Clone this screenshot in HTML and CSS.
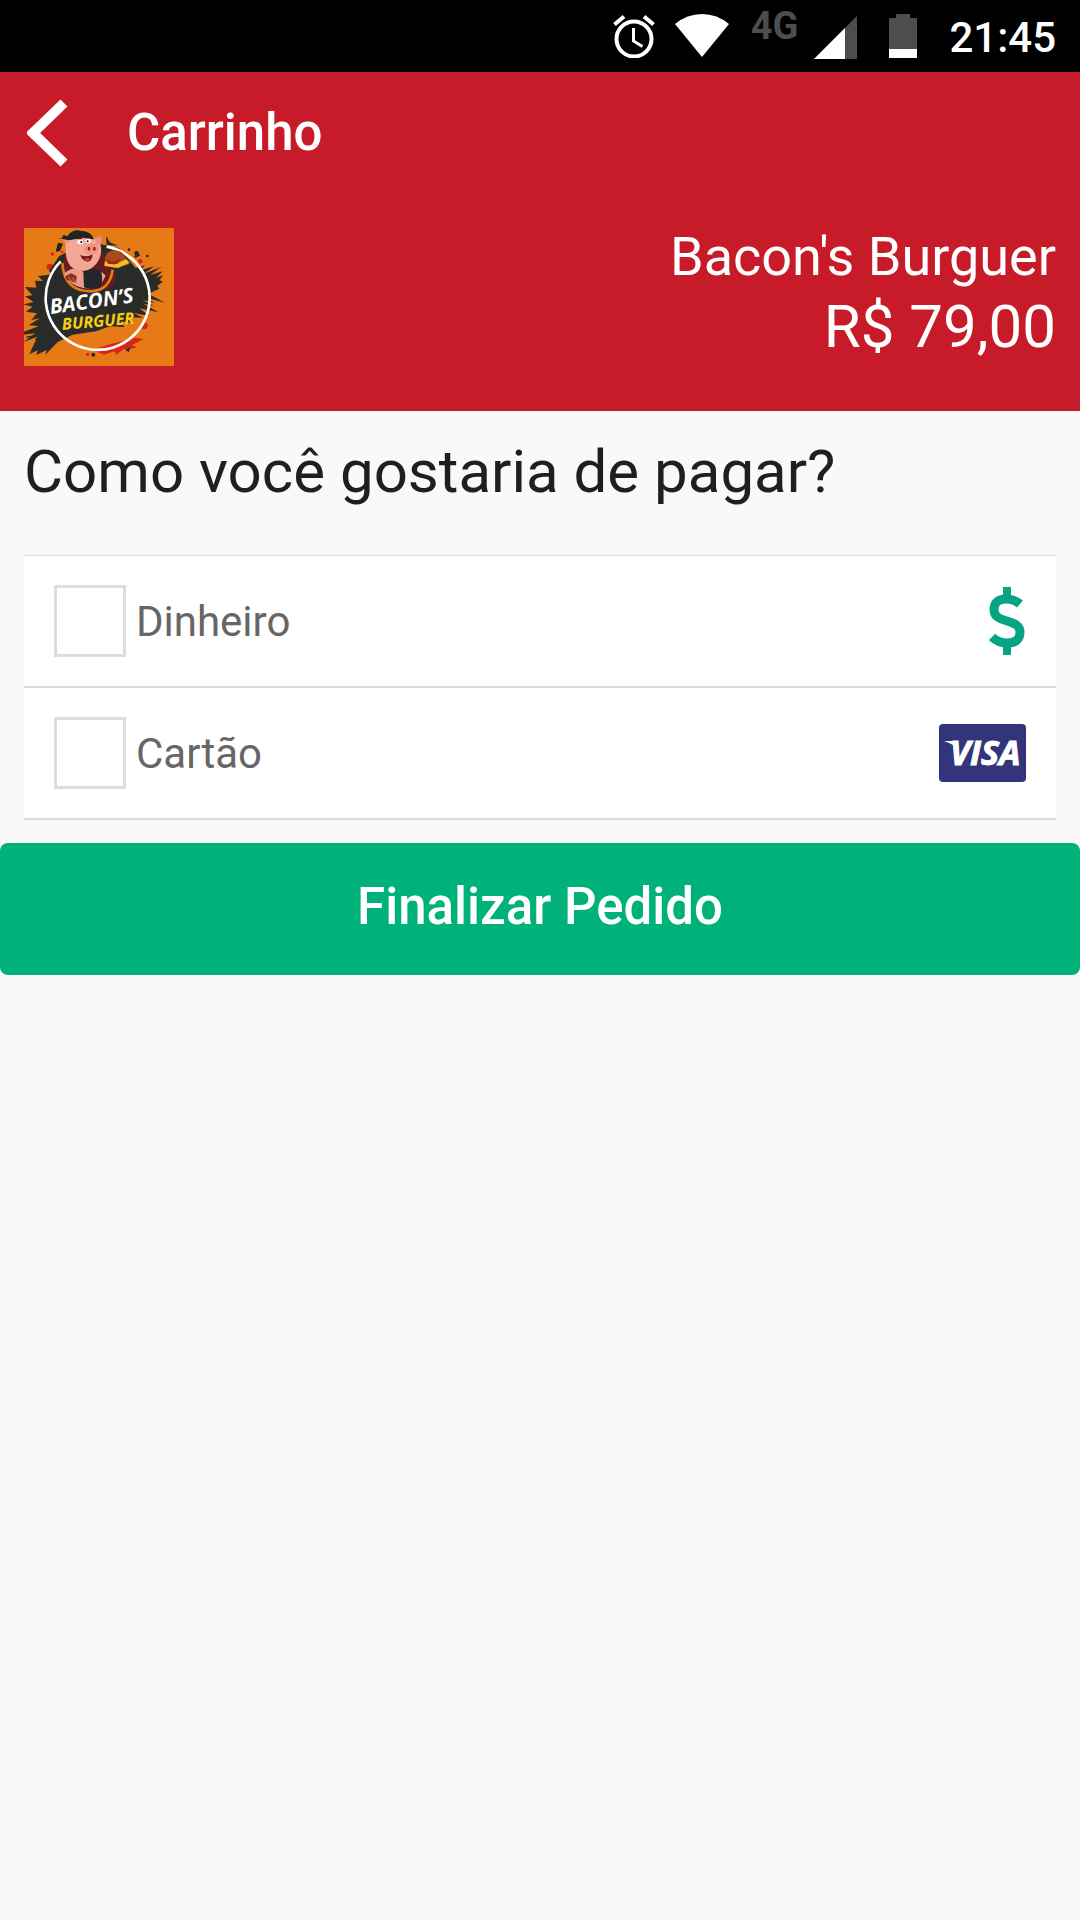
FILE: index.html
```
<!DOCTYPE html>
<html lang="pt-BR">
<head>
    <meta charset="UTF-8">
    <meta name="viewport" content="width=device-width, initial-scale=1.0">
    <title>Carrinho</title>
    <link rel="stylesheet" href="styles.css">
</head>
<body>
    <div class="status-bar">
        <svg class="alarm" width="42" height="44" viewBox="0 0 42 44" fill="none" stroke="#fff">
            <circle cx="21" cy="25" r="17.5" stroke-width="4"/>
            <path d="M20.5 14v13l9 5.500" stroke-width="3"/>
            <path d="M1.500 10.500l9.500-8M40.500 10.500l-9.500-8" stroke-width="4"/>
        </svg>
        <svg class="wifi" width="54" height="44" viewBox="0 0 54 44" fill="#fff">
            <path d="M0 10Q12 0 27 0t27 10L27 43z"/>
        </svg>
        <span class="network">4G</span>
        <svg class="signal" width="43" height="44" viewBox="0 0 43 44">
            <path d="M0 45L43 2v43z" fill="#4d4d4d"/>
            <path d="M0 45L31 14v31z" fill="#fff"/>
        </svg>
        <svg class="battery" width="28" height="44" viewBox="0 0 28 44">
            <path d="M7 0h14v4h7v40H0V4h7z" fill="#4d4d4d"/>
            <path d="M0 35h28v9H0z" fill="#fff"/>
        </svg>
        <span class="clock">21:45</span>
    </div>

    <header class="header">
        <div class="title-bar">
            <button class="back" type="button" aria-label="Voltar">
                <svg width="41" height="68" viewBox="0 0 41 68"><path d="M37 4L6 34l31 30" fill="none" stroke="#fff" stroke-width="10"/></svg>
            </button>
            <h1>Carrinho</h1>
        </div>
        <div class="store">
            <svg class="logo" width="150" height="138" viewBox="0 0 450 414" role="img" aria-label="Bacon's Burguer">
                <rect width="450" height="414" fill="#e67a17"/>
                <!-- paint splashes -->
                <g fill="#d92418">
                    <circle cx="78" cy="117" r="10"/><circle cx="85" cy="78" r="5"/><circle cx="114" cy="72" r="4"/>
                    <circle cx="361" cy="293" r="10"/><circle cx="349" cy="100" r="7"/><circle cx="191" cy="379" r="5"/>
                    <path d="M205 366l45-15 85-22 24 4-35 18 15 8-42 5-19 16-8-10-30 10z"/>
                </g>
                <g fill="#292b29">
                    <path d="M75 130l30-45 80-45 100 20 50 60 28-8-14 15 42-12-34 24 55-23-34 25 38-11-20 19 21-7-10 14 9 5-16 13 6 8-33 15 51 28-55-16 22 16-36-9 35 18-32-7 45 26-57-12 30 23-48-9 29 14-50-1 18 17-35-5 11 17-43-2-42 15-70 10-45 22-37 38 4-14-31 15 4-14-25 12 24-53-44 17 38-27-65 7 75-28-30-4 34-20-26 5 17-20-33-5 20-15-27-7 30-7-26-17 22-3-22-25 34 2-4-21 24 1-15-15 43-5z"/>
                    <path d="M246 23l11 20 25 10-34-2zM8 325l32-4-32 9zM303 365l17-7-6 14zM330 85l13-10 6 7-14 8z"/>
                    <circle cx="338" cy="76" r="7"/><circle cx="208" cy="380" r="6"/><circle cx="38" cy="334" r="4"/>
                    <circle cx="370" cy="84" r="4"/><circle cx="315" cy="65" r="4"/>
                </g>
                <path d="M248 56A156 156 0 1 1 110 100" fill="none" stroke="#fff" stroke-width="8"/>
                <!-- pig inside the badge -->
                <path d="M122 80Q105 193 205 190T262 110L220 55z" fill="#641c20"/>
                <path d="M115 105Q120 190 200 190Q258 188 266 125" fill="none" stroke="#e67a17" stroke-width="8"/>
                <path d="M124 133q30-22 53-2l57 2 11 10q-15 35-40 39-50 2-85-35z" fill="#ed9c89"/>
                <path d="M178 130q30-18 54 2 6 30-3 45-25 12-49 1z" fill="#24262a"/>
                <path d="M125 39q-5 64 22 82 38 20 66-9 25-28 16-64-15-28-53-26-40-4-51 17z" fill="#f4a794"/>
                <path d="M115 33l7 11 13 1-5-18zM211 31l20-7 3 22-17 2z" fill="#e99180"/>
                <path d="M100 30l35 7 42-8 33 5q-7-24-40-26-25-5-40 17l-12-4-5 10-13-1zM102 44l15 3-9 22-13 2z" fill="#202321"/>
                <ellipse cx="169" cy="42" rx="9" ry="7" fill="#fff"/><ellipse cx="192" cy="39" rx="8" ry="7" fill="#fff"/>
                <circle cx="172" cy="42" r="3"/><circle cx="191" cy="40" r="3"/>
                <path d="M158 32l16-2M185 29l13-2" stroke="#3b2020" stroke-width="4"/>
                <path d="M168 81q22 8 38-2-2 22-15 22-14-1-23-20z" fill="#771716"/>
                <path d="M181 93q9-5 17 0-7 9-17 0z" fill="#e84d3f"/>
                <ellipse cx="202" cy="63" rx="22" ry="17" fill="#f29480"/>
                <ellipse cx="195" cy="62" rx="4" ry="6" fill="#7d2a28"/><ellipse cx="211" cy="62" rx="4" ry="6" fill="#7d2a28"/>
                <!-- burger and bacon -->
                <path d="M243 88q7-22 31-21 25 3 31 23l10 19-45 11-27-14z" fill="#a64b1e"/>
                <path d="M242 100l28 10 37-17 10 12-35 15-41-6z" fill="#edbd25"/>
                <path d="M250 95l18 7 23-9-10 14-29 1z" fill="#b51b19"/>
                <path d="M123 145l18-9 17 8-2 20-28-8z" fill="#7e321f"/>
                <path d="M145 149l12 16m-25-19l12 15" stroke="#c76139" stroke-width="4"/>
                <g class="logo-text">
                    <text x="80" y="258" font-size="62" fill="#fff" transform="rotate(-8 80 258)">BACON’S</text>
                    <text x="115" y="306" font-size="49" fill="#f4cf13" transform="rotate(-5 115 306)">BURGUER</text>
                </g>
            </svg>
            <div class="store-info">
                <div class="store-name">Bacon's Burguer</div>
                <div class="total">R$ 79,00</div>
            </div>
        </div>
    </header>

    <main>
        <form>
            <div class="payment">
                <h2>Como você gostaria de pagar?</h2>
                <div class="options">
                    <div class="option">
                        <input type="checkbox" id="dinheiro">
                        <label for="dinheiro">Dinheiro</label>
                        <svg class="money" width="37" height="68" viewBox="0 0 37 68" fill="none" stroke="#05a583">
                            <path d="M18 0v12M18 56v12" stroke-width="8"/>
                            <path d="M31 17Q25 12 17 12 5 12 5 23C5 37 31 31 31 45Q31 56 18 56 9 56 3 50" stroke-width="9"/>
                        </svg>
                    </div>
                    <div class="option">
                        <input type="checkbox" id="cartao">
                        <label for="cartao">Cartão</label>
                        <svg class="visa" width="87" height="58" viewBox="0 0 87 58" role="img" aria-label="Visa">
                            <rect width="87" height="58" rx="4" fill="#32357a"/>
                            <text x="11" y="41" font-size="34" fill="#fff" stroke="#fff">VISA</text>
                            <path d="M5 17h9q4 1 5 9-4-6-14-9z" fill="#fff"/>
                        </svg>
                    </div>
                </div>
            </div>
            <button class="submit" type="button">Finalizar Pedido</button>
        </form>
    </main>
</body>
</html>
```
FILE: styles.css
```
* {
    box-sizing: border-box;
}
body {
    margin: 0;
    background-color: #f9f9f9;
    color: #1f1f1f;
    font-family: Roboto, sans-serif;
}
svg {
    display: block;
    flex-shrink: 0;
}
h1, h2 {
    margin: 0;
}
.status-bar {
    display: flex;
    align-items: center;
    justify-content: flex-end;
    height: 72px;
    padding: 0 24px;
    background-color: #000;
    color: #fff;
}
.wifi {
    margin-left: 20px;
}
.network {
    align-self: flex-start;
    margin-left: 22px;
    padding-top: 6px;
    font-size: 38px;
    line-height: 40px;
    font-weight: 700;
    color: #4d4d4d;
}
.signal {
    margin-left: 16px;
    overflow: visible;
}
.battery {
    margin-left: 32px;
}
.clock {
    margin-left: 32px;
    padding-top: 2px;
    font-size: 42px;
    font-weight: 500;
}
.header {
    background-color: #c81b29;
    color: #fff;
}
.title-bar {
    display: flex;
    align-items: center;
    gap: 59px;
    height: 120px;
    padding: 0 27px;
}
.back {
    padding: 2px 0 0;
    border: none;
    background: none;
    cursor: pointer;
}
.title-bar h1 {
    font-size: 51px;
    font-weight: 500;
}
.store {
    display: flex;
    align-items: flex-end;
    justify-content: space-between;
    padding: 30px 24px 45px;
}
.logo-text {
    font-family: "Open Sans", sans-serif;
    font-style: italic;
    font-weight: 700;
}
.store-info {
    padding-bottom: 4px;
    line-height: 70px;
    text-align: right;
}
.store-name {
    font-size: 54px;
}
.total {
    font-size: 60px;
}
.payment {
    padding: 26px 24px 23px;
}
.payment h2 {
    margin-bottom: 48px;
    font-size: 60px;
    line-height: 70px;
    font-weight: 400;
}
.options {
    border-top: 1px solid #ddd;
    background-color: #fff;
}
.option {
    display: flex;
    align-items: center;
    padding: 29px 30px;
    border-bottom: 2px solid #ddd;
}
.option input {
    appearance: none;
    width: 72px;
    height: 72px;
    margin: 0;
    border: 3px solid #ddd;
    background-color: #fff;
}
.option input:checked {
    background-color: #00b27a;
}
.option label {
    flex: 1;
    padding-left: 10px;
    font-size: 42px;
    color: #666;
}
.visa text {
    font-family: "Open Sans", sans-serif;
    font-style: italic;
    font-weight: 700;
}
.submit {
    display: block;
    width: 100%;
    height: 132px;
    padding: 0 0 6px;
    border: none;
    border-radius: 8px;
    background-color: #00b27a;
    color: #fff;
    font-family: inherit;
    font-size: 51px;
    font-weight: 500;
    cursor: pointer;
}
```
